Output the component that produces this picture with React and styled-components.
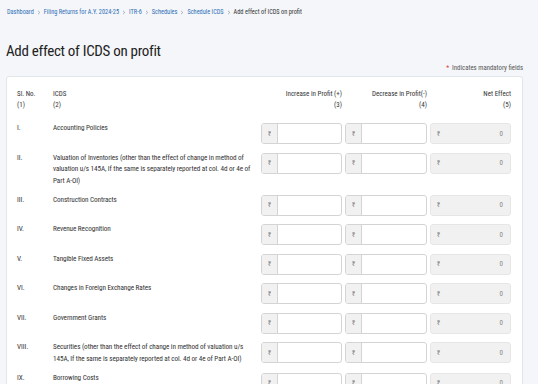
import React from "react";
import styled, { createGlobalStyle } from "styled-components";

const Global = createGlobalStyle`
  html, body { margin: 0; padding: 0; overflow: hidden; }
  body {
    background: #f4f6f9;
    font-family: Roboto, "Liberation Sans", sans-serif;
    font-stretch: 75%;
    color: #333;
  }
`;

const Page = styled.div`
  padding: 0 15px 0 6px;
`;

const Crumbs = styled.nav`
  display: flex;
  align-items: center;
  gap: 3px;
  height: 24px;
  font-size: 6.3px;
  padding-left: 1px;
`;

const Crumb = styled.span`
  color: ${(p) => (p.$current ? "#333" : "#2f6fb7")};
`;

const Chevron = () => (
  <svg width="4" height="5" viewBox="0 0 4 5" aria-hidden="true">
    <path d="M1 0.8 L2.8 2.5 L1 4.2" fill="none" stroke="#8a97a8" strokeWidth="0.7" />
  </svg>
);

const Title = styled.h1`
  margin: 17px 0 0;
  font-size: 15px;
  font-weight: 400;
  color: #222;
  line-height: 20px;
  letter-spacing: -0.3px;
`;

const Mandatory = styled.div`
  text-align: right;
  font-size: 6.8px;
  color: #555;
  margin-top: 2px;
  line-height: 10px;
  & > b {
    color: #e0383e;
    font-weight: 400;
    margin-right: 3px;
  }
`;

const Card = styled.section`
  margin-top: 3px;
  background: #fff;
  border: 1px solid #e2e6eb;
  border-radius: 3px;
  padding: 12px 11px 40px 10px;
`;

const Grid = styled.div`
  display: grid;
  grid-template-columns: 33px 1fr 81px 82px 81px;
  column-gap: 3px;
  row-gap: 8.5px;
  align-items: start;
`;

const Head = styled.div`
  font-size: 7px;
  line-height: 10.5px;
  color: #333;
  text-align: ${(p) => (p.$right ? "right" : "left")};
  margin-bottom: 4.5px;
`;

const Sl = styled.div`
  font-size: 7.2px;
  line-height: 11.5px;
  margin-top: -1px;
  color: #333;
`;

const Label = styled.div`
  font-size: 7.2px;
  line-height: 11.5px;
  margin-top: -1px;
  color: #333;
  letter-spacing: -0.08px;
`;

const Field = styled.div`
  display: flex;
  height: 21px;
  box-sizing: border-box;
  border: 1px solid ${(p) => (p.$readonly ? "#e6e6e6" : "#d4d4d4")};
  border-radius: 3px;
  overflow: hidden;
  background: ${(p) => (p.$readonly ? "#f1f1f1" : "#fff")};
`;

const Prefix = styled.span`
  width: 15px;
  flex: none;
  display: flex;
  align-items: center;
  justify-content: center;
  background: #f1f1f1;
  border-right: 1px solid ${(p) => (p.$readonly ? "#f1f1f1" : "#d4d4d4")};
  font-size: 6.5px;
  color: #777;
`;

const Value = styled.span`
  flex: 1;
  display: flex;
  align-items: center;
  justify-content: flex-end;
  padding-right: 7px;
  font-size: 7px;
  color: #888;
`;

const rows = [
  ["I.", "Accounting Policies"],
  [
    "II.",
    "Valuation of Inventories (other than the effect of change in method of valuation u/s 145A, If the same is separately reported at col. 4d or 4e of Part A-OI)",
  ],
  ["III.", "Construction Contracts"],
  ["IV.", "Revenue Recognition"],
  ["V.", "Tangible Fixed Assets"],
  ["VI.", "Changes in Foreign Exchange Rates"],
  ["VII.", "Government Grants"],
  [
    "VIII.",
    "Securities (other than the effect of change in method of valuation u/s 145A, If the same is separately reported at col. 4d or 4e of Part A-OI)",
  ],
  ["IX.", "Borrowing Costs"],
  ["X.", "Provisions, Contingent Liabilities and Contingent Assets"],
];

function Money({ readonly }) {
  return (
    <Field $readonly={readonly}>
      <Prefix $readonly={readonly}>₹</Prefix>
      <Value>{readonly ? "0" : ""}</Value>
    </Field>
  );
}

const crumbs = ["Dashboard", "Filing Returns for A.Y. 2024-25", "ITR-6", "Schedules", "Schedule ICDS"];

export default function App() {
  return (
    <Page>
      <Global />
      <Crumbs>
        {crumbs.map((c) => (
          <React.Fragment key={c}>
            <Crumb>{c}</Crumb>
            <Chevron />
          </React.Fragment>
        ))}
        <Crumb $current>Add effect of ICDS on profit</Crumb>
      </Crumbs>
      <Title>Add effect of ICDS on profit</Title>
      <Mandatory>
        <b>*</b>Indicates mandatory fields
      </Mandatory>
      <Card>
        <Grid>
          <Head>
            Sl. No.
            <br />
            (1)
          </Head>
          <Head>
            ICDS
            <br />
            (2)
          </Head>
          <Head $right>
            Increase in Profit (+)
            <br />
            (3)
          </Head>
          <Head $right>
            Decrease in Profit(-)
            <br />
            (4)
          </Head>
          <Head $right>
            Net Effect
            <br />
            (5)
          </Head>
          {rows.map(([n, t]) => (
            <React.Fragment key={n}>
              <Sl>{n}</Sl>
              <Label>{t}</Label>
              <Money />
              <Money />
              <Money readonly />
            </React.Fragment>
          ))}
        </Grid>
      </Card>
    </Page>
  );
}
